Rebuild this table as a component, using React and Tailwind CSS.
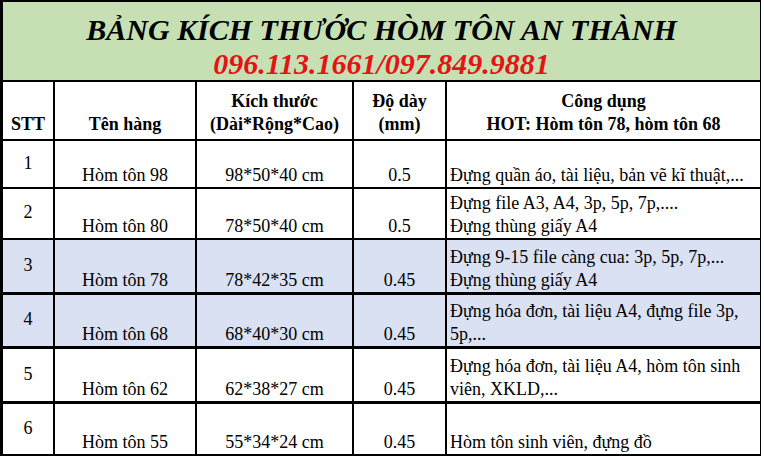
import React from "react";

const rows = [
  { stt: "1", name: "Hòm tôn 98", size: "98*50*40 cm", thick: "0.5", use: ["Đựng quần áo, tài liệu, bản vẽ kĩ thuật,..."], h: "h-[48px]", bb: "border-b-2", blue: false },
  { stt: "2", name: "Hòm tôn 80", size: "78*50*40 cm", thick: "0.5", use: ["Đựng file A3, A4, 3p, 5p, 7p,....", "Đựng thùng giấy A4"], h: "h-[51px]", bb: "border-b-2", blue: false },
  { stt: "3", name: "Hòm tôn 78", size: "78*42*35 cm", thick: "0.45", use: ["Đựng 9-15 file càng cua: 3p, 5p, 7p,...", "Đựng thùng giấy A4"], h: "h-[55px]", bb: "border-b-[3px]", blue: true },
  { stt: "4", name: "Hòm tôn 68", size: "68*40*30 cm", thick: "0.45", use: ["Đựng hóa đơn, tài liệu A4, đựng file 3p,", "5p,..."], h: "h-[54px]", bb: "border-b-[3px]", blue: true },
  { stt: "5", name: "Hòm tôn 62", size: "62*38*27 cm", thick: "0.45", use: ["Đựng hóa đơn, tài liệu A4, hòm tôn sinh", "viên, XKLD,..."], h: "h-[55px]", bb: "border-b-[3px]", blue: false },
  { stt: "6", name: "Hòm tôn 55", size: "55*34*24 cm", thick: "0.45", use: ["Hòm tôn sinh viên, đựng đồ"], h: "h-[52px]", bb: "border-b-2", blue: false },
];

export default function App() {
  return (
    <div className="w-[764px] h-[460px] bg-white overflow-hidden" style={{ fontFamily: '"Liberation Serif", "Times New Roman", serif' }}>
      <div className="w-[761px] border-t-2 border-l-[3px] border-r border-black text-black">
        <div className="h-[80px] bg-[#c6e0b4] border-b-2 border-black flex flex-col items-center pt-[10px]">
          <div className="text-[30px] leading-[35px] font-bold italic whitespace-nowrap">BẢNG KÍCH THƯỚC HÒM TÔN AN THÀNH</div>
          <div className="text-[30px] leading-[34px] font-bold italic text-[#e31414] whitespace-nowrap">096.113.1661/097.849.9881</div>
        </div>
        <div className="grid grid-cols-[52px_142px_157px_93px_313px] h-[59px] border-b-2 border-black font-bold text-[18px] leading-[23px]">
          <div className="border-r-2 border-black flex items-end justify-center pb-[3px]">STT</div>
          <div className="border-r-2 border-black flex items-end justify-center pb-[3px]">Tên hàng</div>
          <div className="border-r-2 border-black flex flex-col items-center justify-end pb-[3px]">
            <span>Kích thước</span>
            <span>(Dài*Rộng*Cao)</span>
          </div>
          <div className="border-r-2 border-black flex flex-col items-center justify-end pb-[3px]">
            <span>Độ dày</span>
            <span>(mm)</span>
          </div>
          <div className="flex flex-col items-center justify-end pb-[3px]">
            <span>Công dụng</span>
            <span>HOT: Hòm tôn 78, hòm tôn 68</span>
          </div>
        </div>
        {rows.map((r) => (
          <div key={r.stt} className={`grid grid-cols-[52px_142px_157px_93px_313px] ${r.h} ${r.bb} border-black text-[18px] leading-[23px] ${r.blue ? "bg-[#d9e1f2]" : "bg-white"}`}>
            <div className="border-r-2 border-black flex items-center justify-center pb-[2px]">{r.stt}</div>
            <div className="border-r-2 border-black flex items-end justify-center">{r.name}</div>
            <div className="border-r-2 border-black flex items-end justify-center">{r.size}</div>
            <div className="border-r-2 border-black flex items-end justify-center">{r.thick}</div>
            <div className="flex flex-col justify-end pl-[3px] whitespace-nowrap">
              {r.use.map((u, i) => (
                <span key={i}>{u}</span>
              ))}
            </div>
          </div>
        ))}
      </div>
    </div>
  );
}
